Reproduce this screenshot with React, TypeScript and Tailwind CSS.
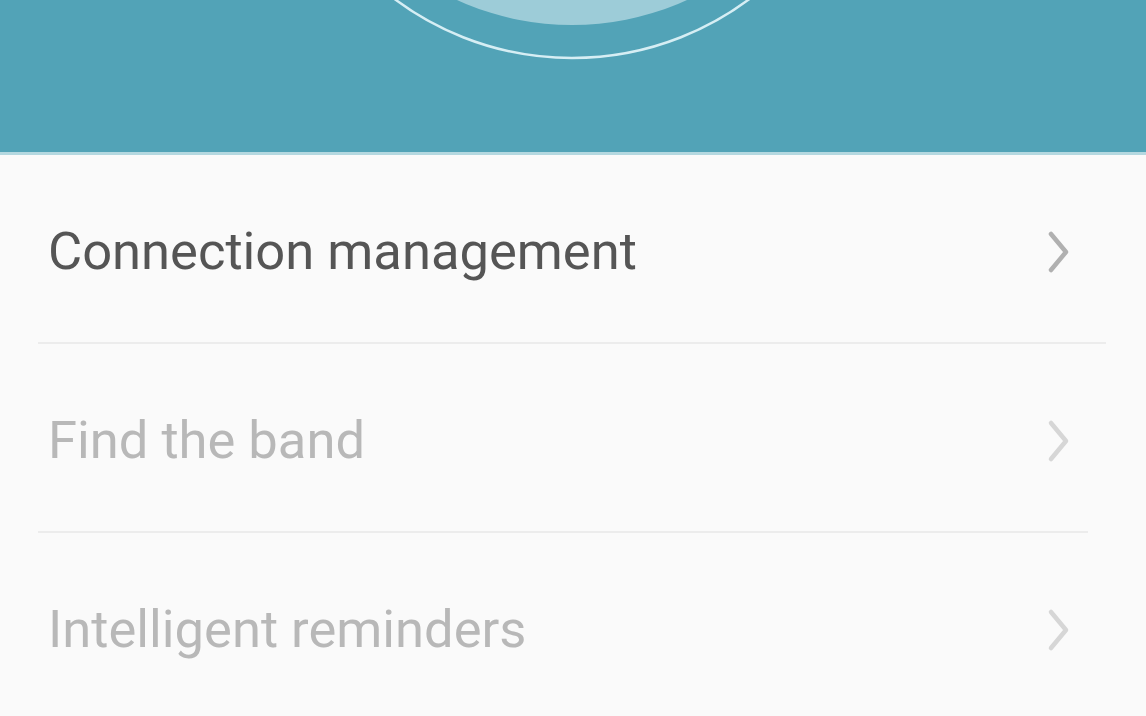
import React from "react";

function Chevron({ color }: { color: string }) {
  return (
    <svg width="24" height="44" viewBox="0 0 24 44" fill="none">
      <path d="M5 4 L20 22 L5 40" stroke={color} strokeWidth="4.5" strokeLinecap="round" strokeLinejoin="round" />
    </svg>
  );
}

function Row({ label, textColor, chevColor, divider }: { label: string; textColor: string; chevColor: string; divider?: string }) {
  return (
    <div className="flex shrink-0 flex-col">
      <div className="flex h-[187px] shrink-0 items-center justify-between pl-[48px] pr-[76px] pt-[6px]">
        <span className={`text-[52.5px] leading-none ${textColor}`} style={{ fontFamily: "Roboto, 'Noto Sans', sans-serif" }}>
          {label}
        </span>
        <Chevron color={chevColor} />
      </div>
      {divider && <div className={`ml-[38px] h-[2px] shrink-0 bg-[#ececec] ${divider}`} />}
    </div>
  );
}

export default function App() {
  return (
    <div className="flex h-[716px] w-[1146px] flex-col overflow-hidden bg-[#fafafa]">
      <div className="relative h-[152px] w-full shrink-0 overflow-hidden bg-[#52a3b7]">
        <svg className="absolute left-0 top-0" width="1146" height="152" viewBox="0 0 1146 152">
          <circle cx="572" cy="-252" r="277" fill="#9dccd8" />
          <circle cx="572" cy="-238" r="296" fill="none" stroke="#d6eef4" strokeWidth="2.5" />
        </svg>
      </div>
      <div className="h-[3px] w-full shrink-0 bg-[#b4d8e0]" />
      <Row label="Connection management" textColor="text-[#555555]" chevColor="#b0b0b0" divider="mr-[40px]" />
      <Row label="Find the band" textColor="text-[#b8b8b8]" chevColor="#d6d6d6" divider="mr-[58px]" />
      <Row label="Intelligent reminders" textColor="text-[#b8b8b8]" chevColor="#d6d6d6" />
    </div>
  );
}
